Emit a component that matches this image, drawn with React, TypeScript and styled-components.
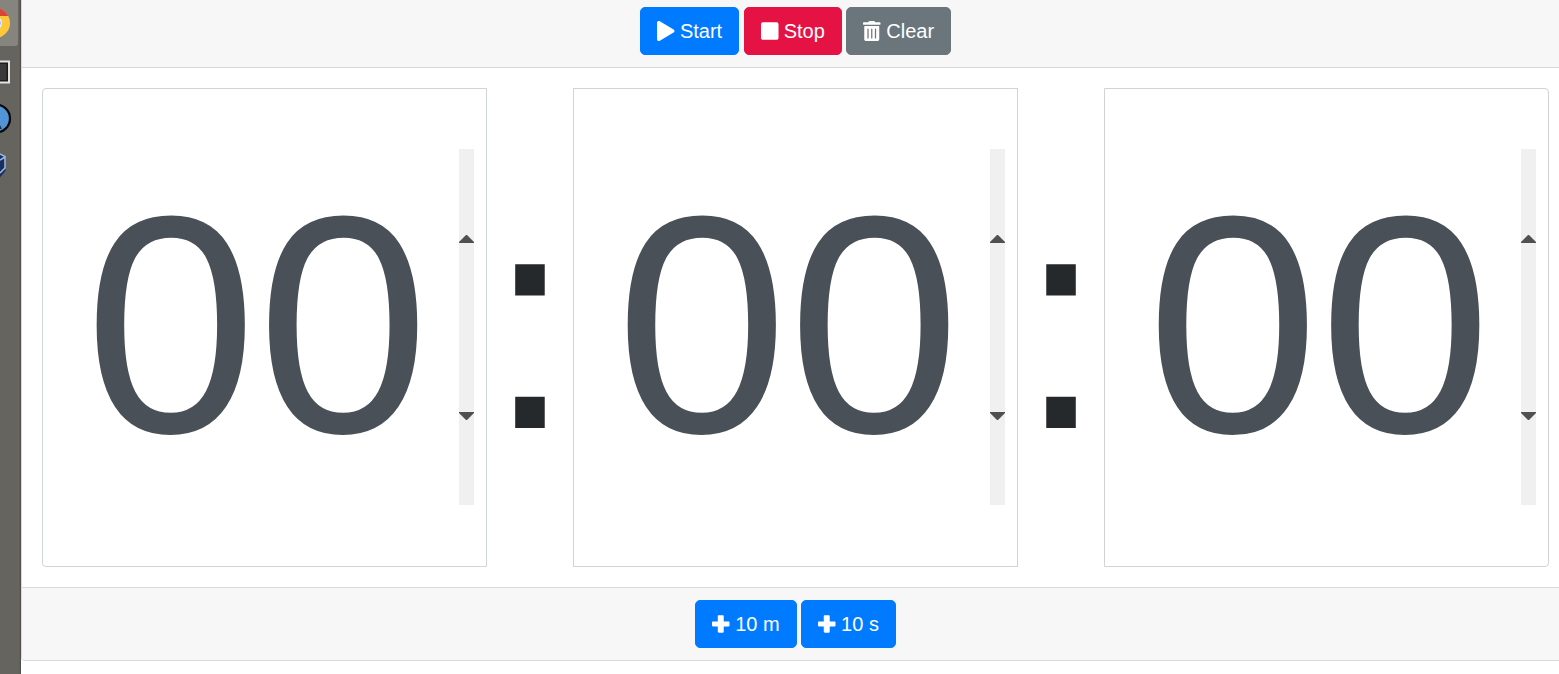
import React, { useState } from "react";
import styled, { createGlobalStyle } from "styled-components";

const GlobalStyle = createGlobalStyle`
  *, *::before, *::after { box-sizing: border-box; }
  html, body, #root { height: 100%; }
  body {
    margin: 0;
    overflow: hidden;
    background: #fff;
    color: #25292c;
    font: 16px/24px "Liberation Sans", Arial, sans-serif;
  }
`;

const Desktop = styled.div`
  display: flex;
  min-height: 100%;
  overflow: hidden;
`;

const Dock = styled.aside`
  flex: 0 0 21px;
  overflow: hidden;
  background: linear-gradient(90deg, #65645f 19px, #4c4b47 21px);
`;

const Page = styled.main`
  flex: 1;
  min-width: 0;
  margin-right: -11px;
`;

const Card = styled.section`
  border: 1px solid #d9d9d9;
  border-top: 0;
  border-radius: 0 0 4px 4px;
  background: #fff;
`;

const Toolbar = styled.header`
  padding: 7px 20px 12px;
  border-bottom: 1px solid #d9d9d9;
  background: #f7f7f7;
  text-align: center;
`;

const Footer = styled.footer`
  padding: 12px 20px;
  border-top: 1px solid #d9d9d9;
  border-radius: 0 0 4px 4px;
  background: #f7f7f7;
  text-align: center;
`;

const Body = styled.div`
  padding: 20px;
`;

const Button = styled.button<{ $color: string }>`
  height: 48px;
  padding: 8px 16px;
  border: 1px solid ${(p) => p.$color};
  border-radius: 5px;
  background: ${(p) => p.$color};
  color: #fff;
  font: 20px/30px "Liberation Sans", Arial, sans-serif;
  vertical-align: middle;
  cursor: pointer;
`;

const Glyph = styled.svg`
  height: 20px;
  overflow: visible;
  fill: currentColor;
  vertical-align: -3px;
`;

const TimeGroup = styled.div`
  display: flex;
  align-items: stretch;
  font-size: 310px;
  line-height: 465px;
`;

const arrow = (points: string) =>
  `url("data:image/svg+xml,%3Csvg xmlns='http://www.w3.org/2000/svg' width='15' height='8'%3E%3Cpath d='${points}' fill='%23505050'/%3E%3C/svg%3E")`;

const TimeInput = styled.input`
  flex: 1 1 0;
  width: 0;
  min-width: 0;
  padding: 0 12px 6px;
  border: 1px solid #ced4da;
  border-radius: 0;
  outline: 0;
  background: #fff;
  color: #495057;
  font: inherit;
  height: 479px;
  text-align: center;

  &:first-of-type { border-radius: 4px 0 0 4px; }
  &:last-of-type { border-radius: 0 4px 4px 0; }

  &::-webkit-inner-spin-button {
    appearance: none;
    opacity: 1;
    width: 15px;
    height: 356px;
    position: relative;
    top: 3px;
    background:
      ${arrow("M7 0h1l7 7v1H0V7z")} 0 86px no-repeat,
      ${arrow("M0 0h15v1L8 8H7L0 1z")} 0 263px no-repeat,
      #f0f0f0;
    cursor: default;
  }
`;

const Colon = styled.span`
  display: flex;
  align-items: center;
  padding-bottom: 14px;
`;

const PLAY =
  "M424.4 214.7L72.4 6.6C43.8-10.3 0 6.1 0 47.9V464c0 37.5 40.7 60.1 72.4 41.3l352-208c31.4-18.5 31.5-64.1 0-82.6z";
const STOP =
  "M400 32H48C21.5 32 0 53.5 0 80v352c0 26.5 21.5 48 48 48h352c26.5 0 48-21.5 48-48V80c0-26.5-21.5-48-48-48z";
const TRASH =
  "M0 84V56c0-13.3 10.7-24 24-24h112l9.4-18.7c4-8.2 12.3-13.3 21.4-13.3h114.3c9.1 0 17.4 5.1 21.5 13.3L312 32h112c13.3 0 24 10.7 24 24v28c0 6.6-5.4 12-12 12H12C5.4 96 0 90.6 0 84zm416 56v324c0 26.5-21.5 48-48 48H80c-26.5 0-48-21.5-48-48V140c0-6.6 5.4-12 12-12h360c6.600 0 12 5.400 12 12zm-272 68c0-8.800-7.200-16-16-16s-16 7.200-16 16v224c0 8.800 7.200 16 16 16s16-7.200 16-16V208zm96 0c0-8.800-7.200-16-16-16s-16 7.200-16 16v224c0 8.800 7.200 16 16 16s16-7.200 16-16V208zm96 0c0-8.800-7.200-16-16-16s-16 7.200-16 16v224c0 8.800 7.200 16 16 16s16-7.200 16-16V208z";
const PLUS =
  "M448 294.200v-76.400c0-13.300-10.700-24-24-24H300V56c0-13.300-10.700-24-24-24h-104c-13.300 0-24 10.700-24 24v137.800H24c-13.300 0-24 10.700-24 24v76.400c0 13.300 10.700 24 24 24h124V456c0 13.300 10.700 24 24 24h104c13.300 0 24-10.700 24-24V318.200h124c13.300 0 24-10.700 24-24z";

function Icon({ path }: { path: string }) {
  return (
    <Glyph viewBox="0 0 448 512" aria-hidden="true">
      <path d={path} />
    </Glyph>
  );
}

const blue = "#007bff";
const pad = (n: number) => String(n).padStart(2, "0");

export default function App() {
  const [h, setH] = useState("00");
  const [m, setM] = useState("00");
  const [s, setS] = useState("00");
  const [running, setRunning] = useState(false);

  const shift = (secs: number) => {
    const total = Math.max(0, +h * 3600 + +m * 60 + +s + secs);
    setH(pad(Math.floor(total / 3600)));
    setM(pad(Math.floor(total / 60) % 60));
    setS(pad(total % 60));
  };

  React.useEffect(() => {
    if (!running) return;
    const id = setTimeout(() => shift(-1), 1000);
    return () => clearTimeout(id);
  });

  const fields = [
    { label: "Hours", value: h, set: setH },
    { label: "Minutes", value: m, set: setM },
    { label: "Seconds", value: s, set: setS },
  ];

  return (
    <>
      <GlobalStyle />
      <Desktop>
        <Dock aria-label="Dock">
          <svg width="21" height="190" viewBox="0 0 21 190" aria-hidden="true">
            <rect x="-10" y="-10" width="28" height="56" rx="3" fill="#85847f" />
            <circle cx="-5" cy="23" r="15" fill="#fdc93b" />
            <path d="M-5 8A15 15 0 0 1 8.300 16H-5z" fill="#db4437" />
            <circle cx="-5" cy="23" r="7" fill="#e8f0fb" />
            <circle cx="-5" cy="23" r="5.500" fill="#4a8af4" />
            <rect x="-10" y="60.500" width="20" height="23" fill="#e4e4e4" />
            <rect x="-10" y="62.500" width="18" height="19" fill="#1c1c1c" />
            <path d="M-10 64H6.500V80H-10z" fill="#3a3a3a" />
            <circle cx="-4" cy="118.500" r="14" fill="#5294d6" stroke="#080808" strokeWidth="2.200" />
            <path d="M0 125l2 4H0z" fill="#234" />
            <path d="M-6 152L5.500 156V171L-2 180z" fill="#1b2f5c" />
            <path d="M-2 153L5 156.500V168L0 173M0 160L5 157" fill="none" stroke="#9cc0ea" strokeWidth="1.500" />
          </svg>
        </Dock>
        <Page>
          <Card>
            <Toolbar>
              <Button type="button" $color={blue} onClick={() => setRunning(true)}>
                <Icon path={PLAY} /> Start
              </Button>{" "}
              <Button type="button" $color="#e51344" onClick={() => setRunning(false)}>
                <Icon path={STOP} /> Stop
              </Button>{" "}
              <Button
                type="button"
                $color="#6b767c"
                onClick={() => {
                  setRunning(false);
                  fields.forEach((f) => f.set("00"));
                }}
              >
                <Icon path={TRASH} /> Clear
              </Button>
            </Toolbar>
            <Body>
              <TimeGroup>
                {fields.map((f, i) => (
                  <React.Fragment key={f.label}>
                    {i > 0 && <Colon>:</Colon>}
                    <TimeInput
                      type="number"
                      min={0}
                      aria-label={f.label}
                      value={f.value}
                      onChange={(e) => f.set(e.target.value)}
                    />
                  </React.Fragment>
                ))}
              </TimeGroup>
            </Body>
            <Footer>
              <Button type="button" $color={blue} onClick={() => shift(600)}>
                <Icon path={PLUS} /> 10 m
              </Button>{" "}
              <Button type="button" $color={blue} onClick={() => shift(10)}>
                <Icon path={PLUS} /> 10 s
              </Button>
            </Footer>
          </Card>
        </Page>
      </Desktop>
    </>
  );
}
